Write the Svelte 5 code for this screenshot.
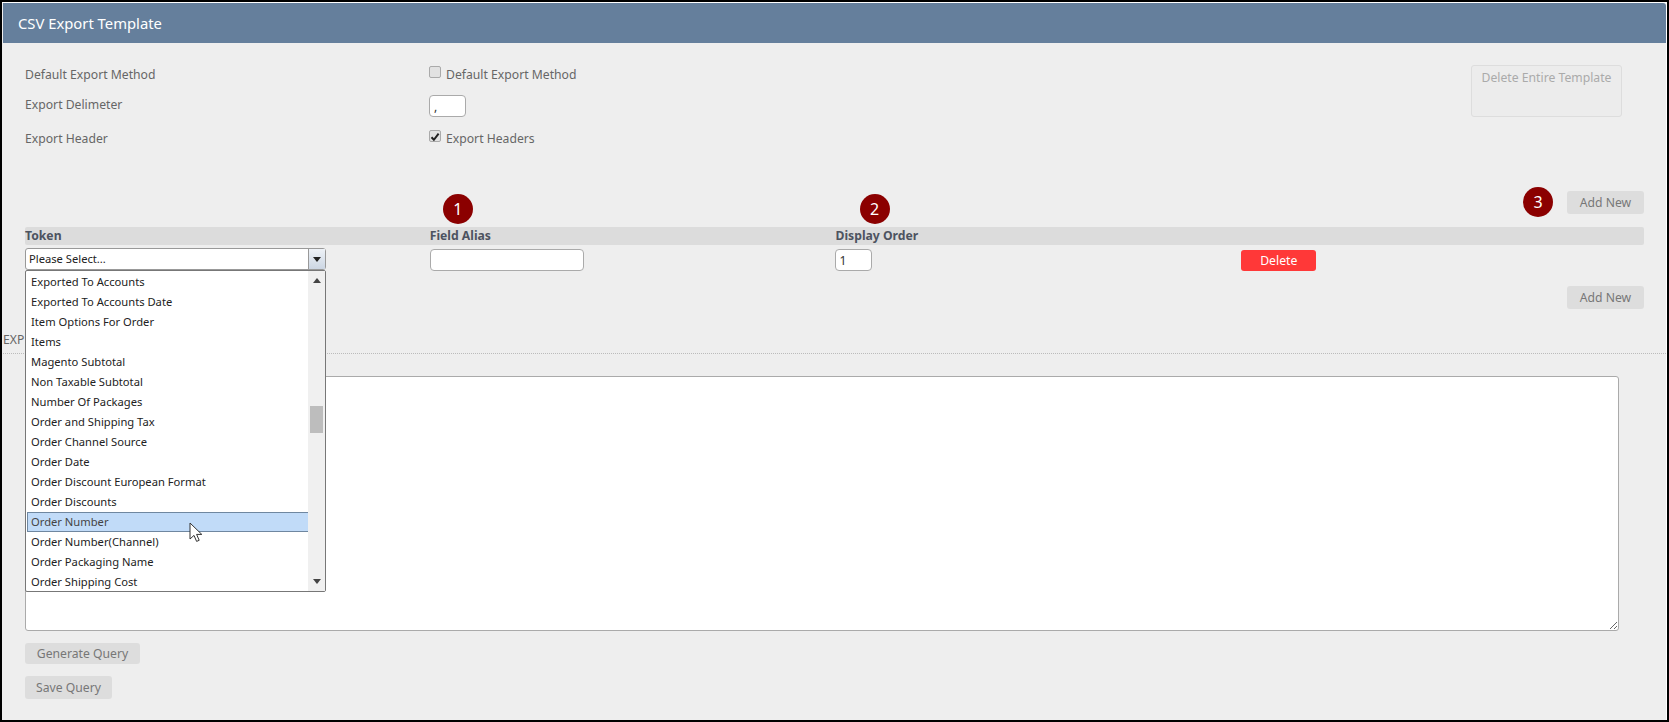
<script lang="ts">
	const options = [
		'Exported To Accounts',
		'Exported To Accounts Date',
		'Item Options For Order',
		'Items',
		'Magento Subtotal',
		'Non Taxable Subtotal',
		'Number Of Packages',
		'Order and Shipping Tax',
		'Order Channel Source',
		'Order Date',
		'Order Discount European Format',
		'Order Discounts',
		'Order Number',
		'Order Number(Channel)',
		'Order Packaging Name',
		'Order Shipping Cost',
	];
	const hovered = 'Order Number';
</script>

<div class="frame">
	<header class="title">CSV Export Template</header>

	<section class="settings">
		<span class="label">Default Export Method</span>
		<label class="check"><input type="checkbox" />Default Export Method</label>
		<button class="delete-template" disabled>Delete Entire Template</button>

		<span class="label">Export Delimeter</span>
		<input class="field delimiter" type="text" value="," />

		<span class="label">Export Header</span>
		<label class="check">
			<span class="tick">
				<input type="checkbox" checked />
				<svg width="10" height="10" viewBox="0 0 10 10">
					<path d="M1.5 5.2l2.4 2.6L8.6 1.6" fill="none" stroke="#222" stroke-width="2" />
				</svg>
			</span>
			Export Headers
		</label>
	</section>

	<section class="tokens">
		<div class="callouts">
			<div></div>
			<div><span class="badge first">1</span></div>
			<div><span class="badge second">2</span></div>
			<div class="add-cell">
				<span class="badge third">3</span>
				<button class="btn add">Add New</button>
			</div>
		</div>

		<div class="table-head">
			<div>Token</div>
			<div>Field Alias</div>
			<div class="order-head">Display Order</div>
			<div></div>
		</div>

		<div class="table-row">
			<div class="token-cell">
				<div class="select">
					<span class="select-value">Please Select...</span>
					<span class="select-arrow"><i class="tri down"></i></span>
				</div>
				<div class="dropdown">
					<ul>
						{#each options as option}
							<li class:hover={option === hovered}>{option}</li>
						{/each}
					</ul>
					<div class="scrollbar">
						<i class="tri up"></i>
						<span class="thumb"></span>
						<i class="tri down"></i>
					</div>
				</div>
				<svg class="cursor" width="14" height="21" viewBox="0 0 14 21">
					<path d="M1 1v16l4-3.6 2.6 6 2.6-1.1-2.6-5.9h5.2z" fill="#fff" stroke="#333" stroke-width="1" />
				</svg>
			</div>
			<div><input class="field alias" type="text" /></div>
			<div><input class="field order" type="text" value="1" /></div>
			<div><button class="btn-delete">Delete</button></div>
		</div>

		<div class="add-bottom"><button class="btn add">Add New</button></div>
	</section>

	<div class="exp-title">EXP</div>

	<section class="query">
		<textarea></textarea>
		<button class="btn generate">Generate Query</button>
		<button class="btn save">Save Query</button>
	</section>
</div>

<style>
	:global(body) {
		margin: 0;
		background: #000;
	}

	.frame {
		box-sizing: border-box;
		height: 722px;
		width: 1669px;
		border: 2px solid #000;
		background: #eee;
		box-shadow: inset 0 1px 0 #fff, inset -1px 0 0 #fff;
		overflow: hidden;
		font-family: "Noto Sans", "Open Sans", sans-serif;
		font-size: 12.2px;
		color: #666;
		padding: 1px 1px 0 0;
	}

	.title {
		box-sizing: border-box;
		height: 40px;
		margin-left: 1px;
		padding: 0 15px;
		display: flex;
		align-items: center;
		background: #657f9c;
		border-top-right-radius: 3px;
		color: #fff;
		font-size: 14.8px;
	}

	.settings {
		display: grid;
		grid-template-columns: 404px 1042px 151px;
		grid-template-rows: 20px 22px 20px;
		row-gap: 11px;
		align-items: center;
		height: 143px;
		padding: 21px 0 0 23px;
		box-sizing: border-box;
	}

	.label {
		line-height: 20px;
		margin-top: 2px;
	}

	.settings .label:nth-of-type(2) {
		align-self: start;
		margin-top: 0;
	}

	.check {
		display: flex;
		align-items: center;
		gap: 5px;
	}

	.check input {
		appearance: none;
		box-sizing: border-box;
		display: block;
		width: 12px;
		height: 12px;
		margin: -4px 0 0;
		border: 1px solid #aaa;
		border-radius: 2px;
		background: #e2e2e2;
	}

	.tick {
		position: relative;
		display: block;
	}

	.tick svg {
		position: absolute;
		left: 1px;
		top: -2px;
	}

	.delete-template {
		grid-row: 1 / span 2;
		grid-column: 3;
		align-self: start;
		box-sizing: border-box;
		height: 52px;
		margin-top: 1px;
		padding: 0 0 28px;
		border: 1px solid #ddd;
		border-radius: 3px;
		background: #ececec;
		color: #aaa;
		font: inherit;
	}

	.field {
		box-sizing: border-box;
		height: 22px;
		border: 1px solid #aaa;
		border-radius: 4px;
		background: #fff;
		padding: 0 4px;
		font: inherit;
		color: #333;
		outline: none;
	}

	.delimiter {
		width: 37px;
	}

	.alias {
		width: 154px;
		margin-top: 1px;
	}

	.order {
		width: 37px;
		margin-top: 1px;
	}

	.tokens {
		padding: 0 22px 0 23px;
	}

	.callouts,
	.table-head,
	.table-row {
		display: grid;
		grid-template-columns: repeat(4, 1fr);
	}

	.callouts {
		height: 41px;
	}

	.badge {
		display: flex;
		align-items: center;
		justify-content: center;
		width: 30px;
		height: 30px;
		border-radius: 50%;
		background: #8b0000;
		color: #fff;
		font-size: 16px;
	}

	.first {
		margin: 8px 0 0 13px;
	}

	.second {
		margin: 8px 0 0 25px;
	}

	.third {
		margin-top: 1px;
	}

	.add-cell {
		display: flex;
		justify-content: flex-end;
		gap: 14px;
	}

	.btn {
		box-sizing: border-box;
		border: none;
		border-radius: 3px;
		background: #ddd;
		color: #777;
		font: inherit;
		padding: 0;
	}

	.add {
		width: 77px;
		height: 23px;
		margin-top: 5px;
	}

	.table-head {
		height: 18px;
		background: #dcdcdc;
		border-radius: 2px;
		font-weight: 700;
		line-height: 18px;
		color: #4d5360;
	}

	.order-head {
		padding-left: 1px;
	}

	.table-row {
		padding-top: 3px;
		height: 24px;
	}

	.token-cell {
		position: relative;
	}

	.select {
		box-sizing: border-box;
		display: flex;
		width: 301px;
		height: 22px;
		border: 1px solid #999;
		border-radius: 3px;
		background: #fff;
		color: #222;
		font-size: 11.2px;
		line-height: 20px;
	}

	.select-value {
		flex: 1;
		padding-left: 3px;
	}

	.select-arrow {
		display: flex;
		align-items: center;
		justify-content: center;
		width: 16px;
		border-left: 1px solid #999;
		background: linear-gradient(#eef2f7, #ccd6e3);
	}

	.tri {
		display: block;
		width: 0;
		height: 0;
		border-left: 4px solid transparent;
		border-right: 4px solid transparent;
	}

	.tri.down {
		border-top: 5px solid #222;
	}

	.tri.up {
		border-bottom: 5px solid #444;
	}

	.dropdown {
		position: absolute;
		z-index: 2;
		top: 22px;
		left: 0;
		box-sizing: border-box;
		display: flex;
		width: 301px;
		height: 322px;
		border: 1px solid #777;
		border-radius: 2px;
		background: #fff;
		color: #222;
		font-size: 11.2px;
	}

	.dropdown ul {
		flex: 1;
		margin: 0;
		padding: 1px 0 0 1px;
		list-style: none;
	}

	.dropdown li {
		box-sizing: border-box;
		height: 20px;
		padding-left: 4px;
		line-height: 20px;
		white-space: nowrap;
	}

	.dropdown li.hover {
		background: #c1dbf8;
		box-shadow: inset 0 1px 0 #6f87a0, inset 0 -1px 0 #6f87a0, inset 1px 0 0 #6f87a0;
		color: #444;
	}

	.scrollbar {
		position: relative;
		display: flex;
		flex-direction: column;
		align-items: center;
		justify-content: space-between;
		width: 17px;
		padding: 7px 0 7px;
		box-sizing: border-box;
		background: #f0f0f0;
	}

	.scrollbar .tri.down {
		border-top-color: #444;
	}

	.thumb {
		position: absolute;
		top: 135px;
		left: 2px;
		width: 13px;
		height: 27px;
		background: #bdbdbd;
	}

	.cursor {
		position: absolute;
		z-index: 3;
		left: 164px;
		top: 274px;
	}

	.btn-delete {
		display: block;
		width: 75px;
		height: 21px;
		margin: 2px 0 0 2px;
		border: none;
		border-radius: 3px;
		background: #ff3838;
		color: #fff;
		font: inherit;
		padding: 0;
	}

	.add-bottom {
		display: flex;
		justify-content: flex-end;
		padding-top: 14px;
	}

	.add-bottom .add {
		margin-top: 0;
	}

	.exp-title {
		box-sizing: border-box;
		height: 45px;
		margin-left: 1px;
		padding-top: 21px;
		border-bottom: 1px dotted #bbb;
		line-height: 20px;
		white-space: nowrap;
	}

	.query {
		display: flex;
		flex-direction: column;
		align-items: flex-start;
		padding: 22px 0 0 23px;
	}

	textarea {
		box-sizing: border-box;
		display: block;
		width: 1594px;
		height: 255px;
		border: 1px solid #aaa;
		border-radius: 3px;
		background: #fff;
		outline: none;
	}

	.generate {
		width: 115px;
		height: 21px;
		margin-top: 12px;
	}

	.save {
		width: 87px;
		height: 23px;
		margin-top: 12px;
	}
</style>
